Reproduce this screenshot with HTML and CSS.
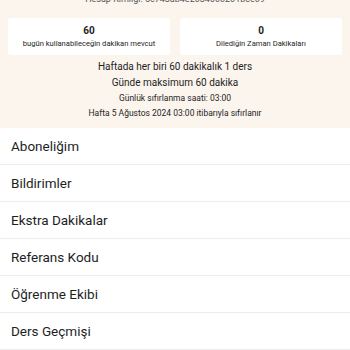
FILE: index.html
```html
<!DOCTYPE html>
<html>
<head>
<meta charset="utf-8">
<link rel="stylesheet" href="styles.css">
</head>
<body>
<div class="header">
  <div class="account">Hesap Kimliği: 5c743ab4e2034600201bce09</div>
  <div class="cards">
    <div class="card">
      <div class="num">60</div>
      <div class="label">bugün kullanabileceğin dakikan mevcut</div>
    </div>
    <div class="card">
      <div class="num">0</div>
      <div class="label">Dilediğin Zaman Dakikaları</div>
    </div>
  </div>
  <div class="info">
    <div class="big">Haftada her biri 60 dakikalık 1 ders</div>
    <div class="big">Günde maksimum 60 dakika</div>
    <div class="small">Günlük sıfırlanma saati: 03:00</div>
    <div class="small">Hafta 5 Ağustos 2024 03:00 itibarıyla sıfırlanır</div>
  </div>
</div>
<ul class="menu">
  <li>Aboneliğim</li>
  <li>Bildirimler</li>
  <li>Ekstra Dakikalar</li>
  <li>Referans Kodu</li>
  <li>Öğrenme Ekibi</li>
  <li>Ders Geçmişi</li>
</ul>
</body>
</html>
```
FILE: styles.css
```css
html, body {
  margin: 0;
  padding: 0;
  background: #ffffff;
  font-family: Roboto, "Noto Sans", sans-serif;
  color: #1e1e1e;
}
.header {
  background: #fbf5ee;
  padding: 0 8px 8px;
  overflow: hidden;
}
.account {
  margin-top: -7px;
  text-align: center;
  font-size: 9px;
  line-height: 12px;
  color: #555;
}
.cards {
  display: flex;
  gap: 10px;
  margin-top: 13px;
}
.card {
  flex: 1;
  background: #ffffff;
  border-radius: 3px;
  height: 37px;
  display: flex;
  flex-direction: column;
  align-items: center;
  justify-content: center;
  gap: 2px;
}
.num {
  font-size: 10px;
  font-weight: bold;
  line-height: 12px;
}
.label {
  font-size: 7.6px;
  line-height: 10px;
}
.info {
  margin-top: 4px;
  text-align: center;
}
.big {
  font-size: 10px;
  line-height: 16px;
}
.small {
  font-size: 8.5px;
  line-height: 14.5px;
}
.menu {
  list-style: none;
  margin: 0;
  padding: 0;
}
.menu li {
  height: 36px;
  line-height: 36px;
  border-bottom: 1px solid #ececec;
  padding-left: 11px;
  font-size: 13.5px;
}
```
